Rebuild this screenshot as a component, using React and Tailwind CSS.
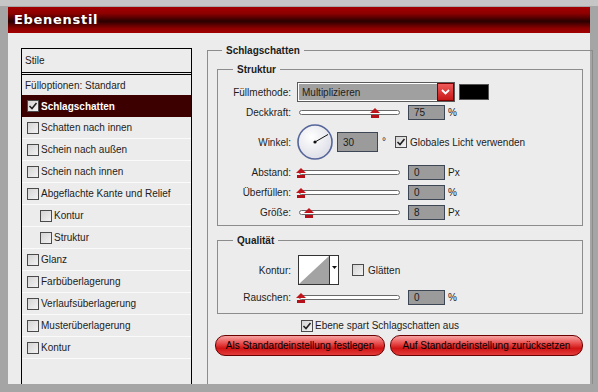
import React from 'react';

const STYLES = [
  { label: 'Schatten nach innen' },
  { label: 'Schein nach außen' },
  { label: 'Schein nach innen' },
  { label: 'Abgeflachte Kante und Relief' },
  { label: 'Kontur', sub: true },
  { label: 'Struktur', sub: true },
  { label: 'Glanz' },
  { label: 'Farbüberlagerung' },
  { label: 'Verlaufsüberlagerung' },
  { label: 'Musterüberlagerung' },
  { label: 'Kontur' },
];

const SIZES = [
  { label: 'Abstand:', pos: 4, value: '0', unit: 'Px' },
  { label: 'Überfüllen:', pos: 4, value: '0', unit: '%' },
  { label: 'Größe:', pos: 12, value: '8', unit: 'Px' },
];

function Check({ checked }) {
  return (
    <span className="flex h-[12px] w-[12px] shrink-0 items-center justify-center border border-[#4a4a4a] bg-[linear-gradient(135deg,#d4d4d4,#f2f2f2)]">
      {checked && (
        <svg width="10" height="10" viewBox="0 0 10 10">
          <path d="M1.5 5 L4 7.5 L8.5 2" fill="none" stroke="#202020" strokeWidth="1.6" />
        </svg>
      )}
    </span>
  );
}

function Label({ children }) {
  return <span className="w-[74px] shrink-0 pr-[1px] text-right">{children}</span>;
}

function Box({ value, w = 'w-[37px]', h = 'h-[15px]' }) {
  return (
    <span className={`flex shrink-0 items-center border border-[#3c4654] bg-[#9b9b9b] pl-[5px] ${w} ${h}`}>{value}</span>
  );
}

function Slider({ pos }) {
  return (
    <div className="relative flex h-[16px] w-[106px] shrink-0 items-center">
      <div className="ml-[2px] h-[5px] w-[101px] rounded-full border border-[#6a6a6a] bg-white" />
      <svg className="absolute top-[3px]" style={{ left: pos - 5 }} width="10" height="10" viewBox="0 0 10 10">
        <polygon points="5,0 10,5 0,5" fill="#c0141c" />
        <rect x="1" y="7" width="8" height="3" fill="#b3101a" />
      </svg>
    </div>
  );
}

function SliderRow({ label, pos, value, unit, className = '' }) {
  return (
    <div className={`flex h-[15px] items-center ${className}`}>
      <Label>{label}</Label>
      <div className="ml-[5px]">
        <Slider pos={pos} />
      </div>
      <div className="ml-[5px]">
        <Box value={value} />
      </div>
      <span className="ml-[3px]">{unit}</span>
    </div>
  );
}

export default function App() {
  return (
    <div className="h-[392px] w-[598px] border-t-[6px] border-[#c6c6c6] bg-[#a5a5a5] pt-[1px] pl-[8px] pr-[8px] font-['Liberation_Sans',Arial,sans-serif] text-[10px] text-[#1c1c1c]">
      <div className="flex h-[377px] flex-col bg-[#ececec]">
        <div className="flex h-[26px] shrink-0 items-center bg-[linear-gradient(#a40000,#8c0000_25%,#2a0000_55%,#8c0000_82%,#a40000)] pl-[6px] font-['DejaVu_Sans',sans-serif] text-[13px] font-bold tracking-[0.7px] text-white">
          Ebenenstil
        </div>

        <div className="flex min-h-0 flex-1 pl-[13px] pt-[11px]">
          <div className="mt-[4px] flex w-[171px] shrink-0 flex-col border border-b-0 border-black">
            <div className="flex h-[26px] items-center border-b-[3px] border-double border-black pl-[3px]">Stile</div>
            <div className="flex h-[20px] items-center pl-[3px]">Fülloptionen: Standard</div>
            <div className="flex h-[22px] items-center gap-[2px] bg-[#3c0000] pl-[5px] font-bold text-white">
              <Check checked />
              <span>Schlagschatten</span>
            </div>
            {STYLES.map((s, i) => (
              <div
                key={i}
                className={`flex h-[22px] items-center gap-[2px] border-b border-[#fafafa] ${s.sub ? 'pl-[18px]' : 'pl-[5px]'}`}
              >
                <Check />
                <span>{s.label}</span>
              </div>
            ))}
          </div>

          <fieldset className="ml-[15px] w-[383px] shrink-0 border border-b-0 border-[#8c8c8c] px-[9px] pt-[6px]">
            <legend className="ml-[5px] px-[4px] text-[10px] font-bold leading-[13px]">Schlagschatten</legend>

            <fieldset className="border border-[#8c8c8c] pb-[5px]">
              <legend className="ml-[15px] px-[4px] font-bold leading-[13px]">Struktur</legend>

              <div className="mt-[6px] flex h-[20px] items-center">
                <Label>Füllmethode:</Label>
                <div className="ml-[5px] flex h-[20px] w-[158px] border border-[#5a5a5a] bg-[#a0a0a0] shadow-[inset_0_0_0_1px_#fff]">
                  <span className="flex flex-1 items-center pl-[4px] text-[10px]">Multiplizieren</span>
                  <span className="flex w-[17px] items-center justify-center border border-[#7a0000] bg-[linear-gradient(#ee5a5a,#c81818)]">
                    <svg width="9" height="6" viewBox="0 0 9 6">
                      <path d="M1 1 L4.5 4.5 L8 1" fill="none" stroke="#fff" strokeWidth="1.8" />
                    </svg>
                  </span>
                </div>
                <span className="ml-[4px] h-[16px] w-[30px] border border-[#555] bg-black" />
              </div>

              <SliderRow label="Deckkraft:" pos={78} value="75" unit="%" className="mt-[3px]" />

              <div className="mt-[4px] flex h-[36px] items-center">
                <Label>Winkel:</Label>
                <svg className="ml-[5px] shrink-0" width="36" height="36" viewBox="0 0 36 36">
                  <defs>
                    <radialGradient id="dial" cx="0.4" cy="0.35" r="0.7">
                      <stop offset="0" stopColor="#ffffff" />
                      <stop offset="1" stopColor="#dcdde6" />
                    </radialGradient>
                  </defs>
                  <circle cx="18" cy="18" r="17" fill="url(#dial)" stroke="#56659a" strokeWidth="1.6" />
                  <line x1="18" y1="18" x2="31" y2="10.5" stroke="#111" strokeWidth="1" />
                  <circle cx="18" cy="18" r="1.6" fill="#111" />
                </svg>
                <div className="ml-[4px]">
                  <Box value="30" w="w-[41px]" h="h-[20px]" />
                </div>
                <span className="ml-[4px] self-start pt-[10px]">°</span>
                <div className="ml-[9px] flex items-center gap-[3px]">
                  <Check checked />
                  <span>Globales Licht verwenden</span>
                </div>
              </div>

              {SIZES.map((r) => (
                <SliderRow key={r.label} {...r} className="mt-[5px]" />
              ))}
            </fieldset>

            <fieldset className="mt-[8px] border border-[#8c8c8c] pb-[8px]">
              <legend className="ml-[15px] px-[4px] font-bold leading-[13px]">Qualität</legend>

              <div className="mt-[8px] flex h-[30px] items-center">
                <Label>Kontur:</Label>
                <div className="ml-[6px] flex h-[30px] w-[41px] border border-[#333]">
                  <svg width="30" height="28" viewBox="0 0 30 28" className="bg-white">
                    <polygon points="0,28 30,0 30,28" fill="#a3a3a3" />
                  </svg>
                  <span className="flex flex-1 justify-center border-l border-[#333] bg-white pt-[10px]">
                    <svg width="5" height="3" viewBox="0 0 5 3">
                      <polygon points="0,0 5,0 2.5,3" fill="#111" />
                    </svg>
                  </span>
                </div>
                <div className="ml-[13px] flex items-center gap-[4px]">
                  <Check />
                  <span>Glätten</span>
                </div>
              </div>

              <SliderRow label="Rauschen:" pos={4} value="0" unit="%" className="mt-[5px]" />
            </fieldset>

            <div className="ml-[84px] mt-[5px] flex h-[13px] items-center gap-[2px]">
              <Check checked />
              <span>Ebene spart Schlagschatten aus</span>
            </div>

            <div className="-ml-[2px] mt-[3px] flex gap-[5px]">
              <button className="h-[21px] w-[170px] shrink-0 rounded-[10px] border border-[#6a0000] bg-[linear-gradient(#f6a2a2,#e84a4a_40%,#d21414_65%,#e23c3c)] text-[10px] text-black">
                Als Standardeinstellung festlegen
              </button>
              <button className="h-[21px] w-[193px] shrink-0 rounded-[10px] border border-[#6a0000] bg-[linear-gradient(#f6a2a2,#e84a4a_40%,#d21414_65%,#e23c3c)] text-[10px] text-black">
                Auf Standardeinstellung zurücksetzen
              </button>
            </div>
          </fieldset>
        </div>
      </div>
    </div>
  );
}
